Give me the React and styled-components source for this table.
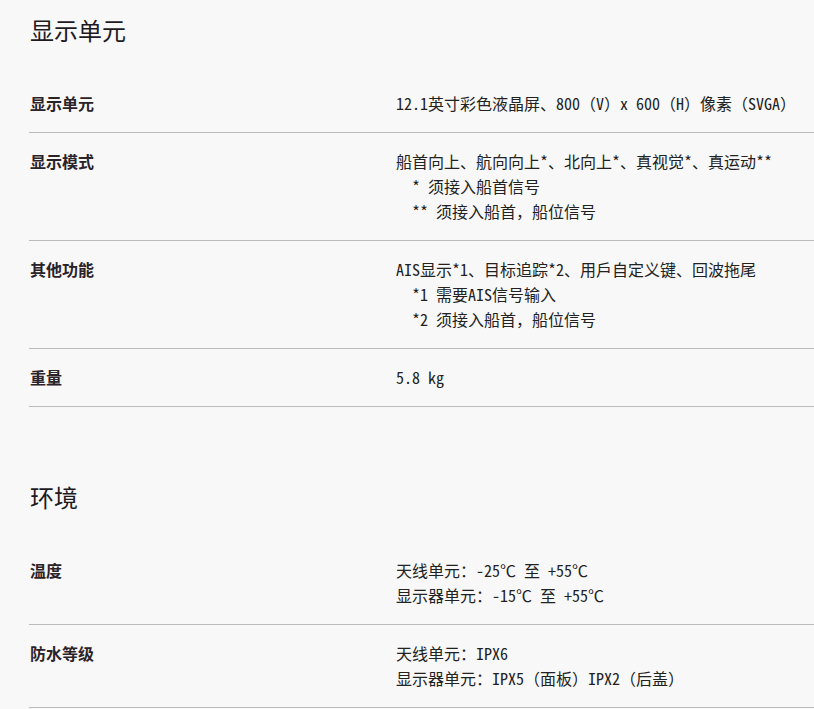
import React from "react";
import styled, { createGlobalStyle } from "styled-components";

const specs = [
  {
    title: "显示单元",
    rows: [
      {
        label: "显示单元",
        value: "12.1英寸彩色液晶屏、800（V）x 600（H）像素（SVGA）",
      },
      {
        label: "显示模式",
        value: "船首向上、航向向上*、北向上*、真视觉*、真运动**",
        notes: ["* 须接入船首信号", "** 须接入船首，船位信号"],
      },
      {
        label: "其他功能",
        value: "AIS显示*1、目标追踪*2、用戶自定义键、回波拖尾",
        notes: ["*1 需要AIS信号输入", "*2 须接入船首，船位信号"],
      },
      { label: "重量", value: "5.8 kg" },
    ],
  },
  {
    title: "环境",
    rows: [
      {
        label: "温度",
        value: "天线单元：-25℃ 至 +55℃",
        lines: ["显示器单元：-15℃ 至 +55℃"],
      },
      {
        label: "防水等级",
        value: "天线单元：IPX6",
        lines: ["显示器单元：IPX5（面板）IPX2（后盖）"],
      },
    ],
  },
];

function App() {
  return (
    <>
      <GlobalStyle />
      <Page>
        {specs.map((section) => (
          <Section key={section.title}>
            <SectionTitle>{section.title}</SectionTitle>
            {section.rows.map((row) => (
              <Row key={row.label}>
                <Label>{row.label}</Label>
                <Value>
                  <Line>{row.value}</Line>
                  {row.lines &&
                    row.lines.map((l) => <Line key={l}>{l}</Line>)}
                  {row.notes &&
                    row.notes.map((n) => (
                      <Line key={n} $indent>
                        {n}
                      </Line>
                    ))}
                </Value>
              </Row>
            ))}
          </Section>
        ))}
      </Page>
    </>
  );
}

const GlobalStyle = createGlobalStyle`
  body {
    margin: 0;
    background: #f8f8f8;
    color: #222;
    font-family: "Noto Sans CJK SC", "Noto Sans", sans-serif;
  }
`;

const Page = styled.div`
  padding-left: 29px;
  overflow: hidden;
`;

const Section = styled.section`
  & + & {
    margin-top: 72px;
  }
`;

const SectionTitle = styled.h2`
  margin: 12px 0 27px 1px;
  font-size: 24px;
  line-height: 36px;
  font-weight: 400;
  color: #1e1a1e;
`;

const Row = styled.div`
  display: grid;
  grid-template-columns: 367px 1fr;
  padding: 16px 0;
  border-bottom: 1px solid #bbb;
`;

const Label = styled.div`
  padding-left: 1px;
  font-size: 16px;
  line-height: 25px;
  font-weight: 700;
  color: #2a2329;
`;

const Value = styled.div`
  display: flex;
  flex-direction: column;
  font-family: "Noto Sans Mono CJK SC", "Noto Sans CJK SC", monospace;
  font-size: 16px;
  line-height: 25px;
  color: #222;
`;

const Line = styled.div`
  padding-left: ${(p) => (p.$indent ? "16px" : "0")};
  white-space: pre;
`;

export default App;
